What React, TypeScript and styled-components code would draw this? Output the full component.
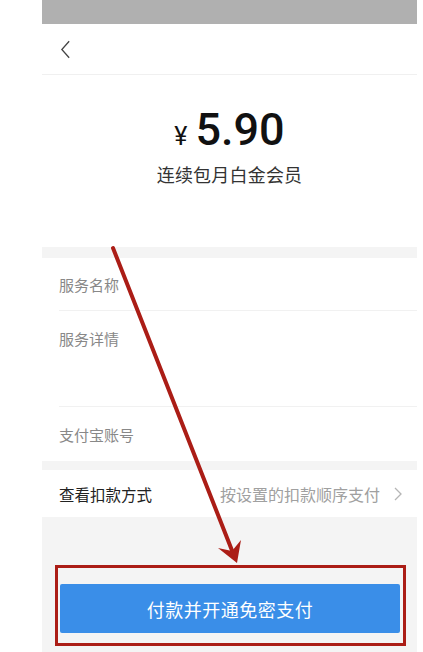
import styled, { createGlobalStyle } from "styled-components";

const GlobalStyle = createGlobalStyle`
  html, body {
    margin: 0;
    padding: 0;
    background: #ffffff;
  }
  body {
    font-family: "Noto Sans CJK SC", "Noto Sans", sans-serif;
  }
`;

export default function App() {
  return (
    <>
      <GlobalStyle />
      <Phone>
        <StatusBar />
        <Header>
          <BackIcon viewBox="0 0 12 20">
            <path d="M10 1 L2 10 L10 19" />
          </BackIcon>
        </Header>
        <PriceBox>
          <Price>
            <Currency>¥</Currency>
            <Amount>5.90</Amount>
          </Price>
          <Product>连续包月白金会员</Product>
        </PriceBox>
        <Gap $h={11} />
        <Row $h={53}>
          <Label>服务名称</Label>
        </Row>
        <Row $h={96} $top>
          <Label>服务详情</Label>
        </Row>
        <Row $h={54} $last>
          <Label>支付宝账号</Label>
        </Row>
        <Gap $h={9} />
        <LinkRow>
          <LinkLabel>查看扣款方式</LinkLabel>
          <LinkValue>
            按设置的扣款顺序支付
            <Chevron viewBox="0 0 8 14">
              <path d="M1 1 L7 7 L1 13" />
            </Chevron>
          </LinkValue>
        </LinkRow>
        <Footer>
          <Frame>
            <PayButton>付款并开通免密支付</PayButton>
          </Frame>
        </Footer>
        <Arrow viewBox="0 0 375 652">
          <line x1="71" y1="248" x2="191" y2="553" />
          <polygon points="195,563 176,548 190,551 199,540" />
        </Arrow>
      </Phone>
    </>
  );
}

const Phone = styled.div`
  position: relative;
  width: 375px;
  height: 652px;
  margin-left: 42px;
  display: flex;
  flex-direction: column;
  background: #ffffff;
  overflow: hidden;
`;

const StatusBar = styled.div`
  height: 24px;
  background: #b0b0b0;
`;

const Header = styled.div`
  height: 50px;
  display: flex;
  align-items: center;
  padding-left: 18px;
  border-bottom: 1px solid #f0f0f0;
`;

const BackIcon = styled.svg`
  width: 11px;
  height: 19px;
  fill: none;
  stroke: #444;
  stroke-width: 1.4;
`;

const PriceBox = styled.div`
  height: 172px;
  display: flex;
  flex-direction: column;
  align-items: center;
  padding-top: 32px;
  box-sizing: border-box;
`;

const Price = styled.div`
  display: flex;
  align-items: baseline;
  gap: 8px;
  color: #111;
  font-family: Roboto, "Liberation Sans", sans-serif;
`;

const Currency = styled.span`
  font-size: 25px;
`;

const Amount = styled.span`
  font-size: 45px;
  font-weight: 500;
  line-height: 46px;
`;

const Product = styled.div`
  margin-top: 8px;
  font-size: 18px;
  color: #333;
  letter-spacing: 0.2px;
`;

const Gap = styled.div<{ $h: number }>`
  height: ${(p) => p.$h}px;
  background: #f4f4f4;
`;

const Row = styled.div<{ $h: number; $top?: boolean; $last?: boolean }>`
  height: ${(p) => p.$h}px;
  box-sizing: border-box;
  margin-left: 17px;
  display: flex;
  align-items: ${(p) => (p.$top ? "flex-start" : "center")};
  padding-top: ${(p) => (p.$top ? "17px" : "0")};
  border-bottom: ${(p) => (p.$last ? "none" : "1px solid #f1f1f1")};
`;

const Label = styled.span`
  font-size: 15px;
  color: #888;
`;

const LinkRow = styled.div`
  height: 47px;
  display: flex;
  align-items: center;
  justify-content: space-between;
  padding: 0 15px 0 17px;
`;

const LinkLabel = styled.span`
  font-size: 15.5px;
  color: #222;
`;

const LinkValue = styled.span`
  display: flex;
  align-items: center;
  gap: 14px;
  font-size: 16px;
  color: #a0a0a0;
`;

const Chevron = styled.svg`
  width: 8px;
  height: 14px;
  fill: none;
  stroke: #b5b5b5;
  stroke-width: 1.3;
`;

const Footer = styled.div`
  flex: 1;
  background: #f4f4f4;
  padding: 48px 11px 0 13px;
`;

const Frame = styled.div`
  border: 3px solid #ab1d16;
  padding: 16px 3px 10px 2px;
`;

const PayButton = styled.button`
  display: block;
  width: 100%;
  height: 49px;
  border: none;
  border-radius: 2px;
  background: #3a8ee8;
  color: #ffffff;
  font-family: "Noto Sans CJK SC", sans-serif;
  font-size: 18px;
  letter-spacing: 0.5px;
`;

const Arrow = styled.svg`
  position: absolute;
  left: 0;
  top: 0;
  width: 375px;
  height: 652px;
  pointer-events: none;
  line {
    stroke: #ab1d16;
    stroke-width: 4;
    stroke-linecap: round;
  }
  polygon {
    fill: #ab1d16;
  }
`;
